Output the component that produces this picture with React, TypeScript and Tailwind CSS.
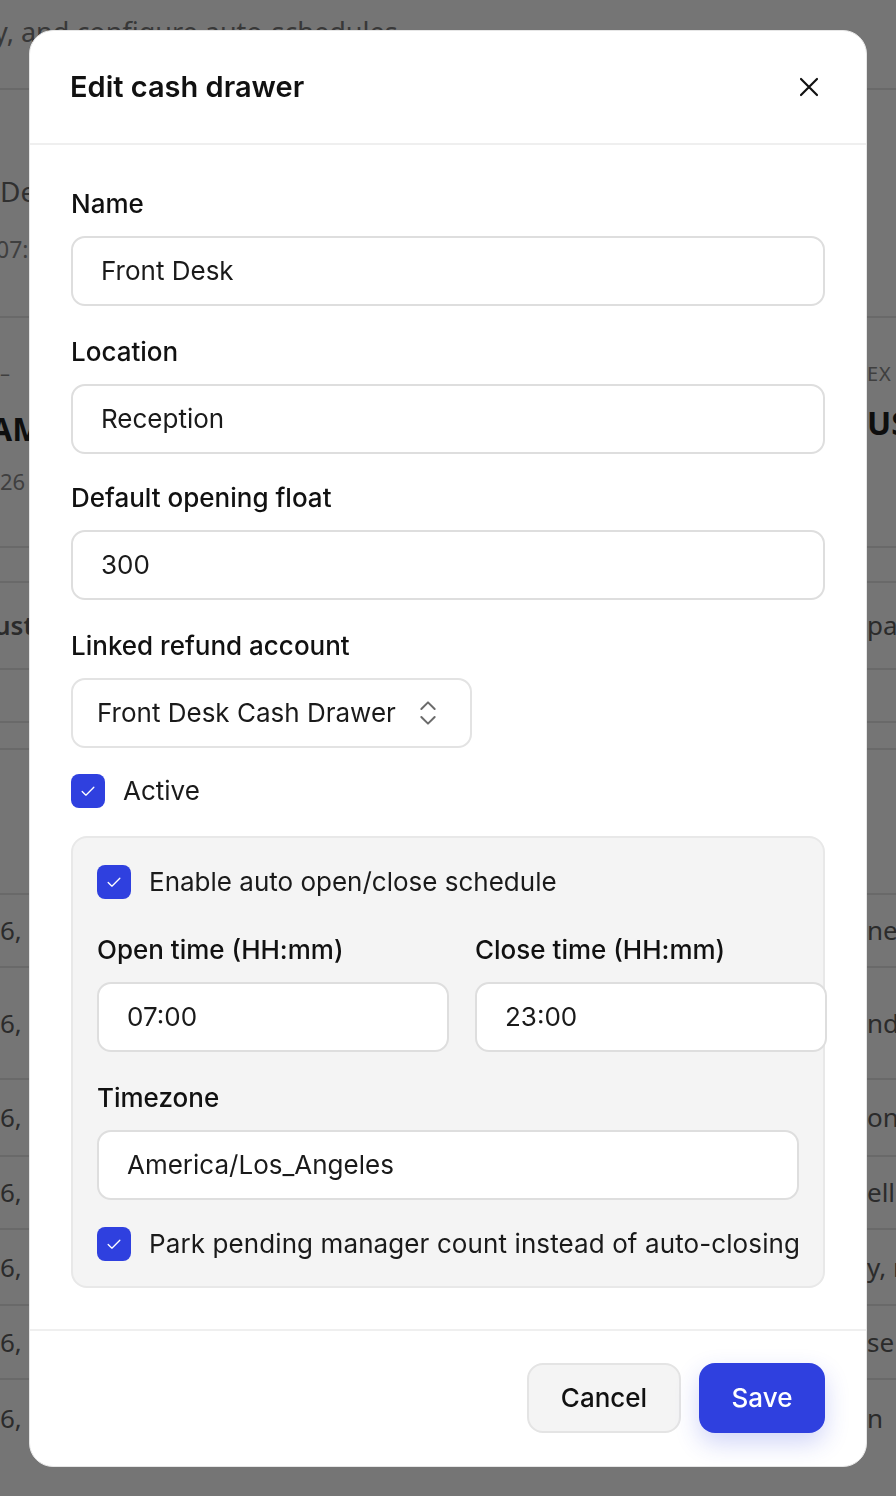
import { useState } from "react";
import { ChevronsUpDown } from "lucide-react";

type BgRow = { h: string; left?: string; right?: string; leftCls?: string; rightCls?: string; line?: boolean };

// rows of the page sitting behind the dialog; only the edges show
const bgRows: BgRow[] = [
  { h: "h-[90px]", line: true },
  { h: "h-[228px] pt-[30px]", line: true },
  { h: "h-[230px] pb-[8px]", line: true },
  { h: "h-[35px]", line: true },
  { h: "h-[87px]", left: "ust", right: "pa", leftCls: "-ml-[6px] font-semibold", line: true },
  { h: "h-[53px]", line: true },
  { h: "h-[27px]", line: true },
  { h: "h-[145px]", line: true },
  { h: "h-[73px]", left: "6,", right: "ne", line: true },
  { h: "h-[112px]", left: "6,", right: "nd", line: true },
  { h: "h-[77px]", left: "6,", right: "on", line: true },
  { h: "h-[73px]", left: "6,", right: "ell", line: true },
  { h: "h-[76px]", left: "6,", right: "y, r", rightCls: "-ml-[4px]", line: true },
  { h: "h-[74px]", left: "6,", right: "se", line: true },
  { h: "h-[77px]", left: "6,", right: "n", line: false },
];

function Checkbox({ checked, onChange }: { checked: boolean; onChange: () => void }) {
  return (
    <button
      type="button"
      onClick={onChange}
      className={`w-[34px] h-[34px] shrink-0 rounded-[8px] flex items-center justify-center ${
        checked ? "bg-[#2f40df]" : "bg-white border-2 border-[#d4d4d4]"
      }`}
    >
      {checked && (
        <svg width="20" height="20" viewBox="0 0 24 24" fill="none">
          <path d="M5 12.5l4.5 4.5L19 7.5" stroke="white" strokeWidth="1.6" strokeLinecap="round" strokeLinejoin="round" />
        </svg>
      )}
    </button>
  );
}

function Field({ label, value, onChange, className = "" }: { label: string; value: string; onChange: (v: string) => void; className?: string }) {
  return (
    <div className={`flex flex-col ${className}`}>
      <label className="text-[26px] leading-[30px] font-medium text-[#111] mb-[17px] whitespace-nowrap">{label}</label>
      <input
        value={value}
        onChange={(e) => onChange(e.target.value)}
        className="h-[70px] w-full rounded-[14px] border-2 border-[#dedede] bg-white px-[28px] text-[26px] text-[#1a1a1a] outline-none"
      />
    </div>
  );
}

export default function App() {
  const [form, setForm] = useState({
    name: "Front Desk",
    location: "Reception",
    float: "300",
    open: "07:00",
    close: "23:00",
    tz: "America/Los_Angeles",
  });
  const [active, setActive] = useState(true);
  const [auto, setAuto] = useState(true);
  const [park, setPark] = useState(true);

  return (
    <div className="relative h-[1496px] w-full overflow-hidden bg-white" style={{ fontFamily: "Inter, 'Noto Sans', sans-serif" }}>
      {/* Page behind */}
      <div className="flex flex-col text-[#5f5f5f]" style={{ fontFamily: "'Noto Sans', sans-serif" }}>
        {bgRows.map((r, i) => (
          <div key={i} className={`${r.h} flex items-center justify-between ${r.line ? "border-b-2 border-[#e4e4e4]" : ""}`}>
            {i === 0 ? (
              <div className="self-start mt-[12px] -ml-[6px] text-[27px] text-[#7a7a7a] whitespace-nowrap">y, and configure auto-schedules</div>
            ) : i === 1 ? (
              <div className="flex flex-col gap-[20px]">
                <span className="text-[28px] text-[#6a6a6a]">De</span>
                <span className="-ml-[4px] text-[23px] text-[#8a8a8a]">07:0</span>
              </div>
            ) : i === 2 ? (
              <>
                <div className="flex flex-col">
                  <span className="text-[20px] text-[#8a8a8a]">–</span>
                  <span className="-ml-[10px] mt-[16px] text-[32px] font-bold text-[#1f1f1f]">AM</span>
                  <span className="mt-[12px] text-[22px] text-[#8a8a8a]">26</span>
                </div>
                <div className="flex flex-col w-[29px] overflow-hidden">
                  <span className="text-[20px] text-[#8a8a8a] tracking-wider">EX</span>
                  <span className="mt-[10px] text-[32px] font-bold text-[#1f1f1f]">US</span>
                  <span className="h-[50px]" />
                </div>
              </>
            ) : (
              <>
                <span className={`text-[26px] whitespace-nowrap ${r.leftCls ?? ""}`}>{r.left}</span>
                <span className={`w-[29px] overflow-hidden text-[26px] whitespace-nowrap ${r.rightCls ?? ""}`}>{r.right}</span>
              </>
            )}
          </div>
        ))}
      </div>

      {/* Overlay */}
      <div className="fixed inset-0 bg-black/[0.54] flex items-center justify-center p-[29px]">
        <div className="w-full bg-white rounded-[24px] border border-[#e6e6e6] overflow-hidden flex flex-col">
          {/* Header */}
          <div className="h-[114px] px-[40px] flex items-center justify-between border-b-2 border-[#efefef]">
            <h2 className="text-[29px] leading-[34px] font-semibold text-[#111]">Edit cash drawer</h2>
            <button type="button" className="w-[36px] h-[36px] -mr-[1px] flex items-center justify-center text-[#111]">
              <svg width="20" height="20" viewBox="0 0 20 20" fill="none">
                <path d="M2 2l16 16M18 2L2 18" stroke="currentColor" strokeWidth="2.2" strokeLinecap="round" />
              </svg>
            </button>
          </div>

          {/* Body */}
          <div className="px-[41px] pt-[44px] pb-[41px] flex flex-col">
            <Field label="Name" value={form.name} onChange={(v) => setForm({ ...form, name: v })} />
            <Field label="Location" value={form.location} onChange={(v) => setForm({ ...form, location: v })} className="mt-[31px]" />
            <Field label="Default opening float" value={form.float} onChange={(v) => setForm({ ...form, float: v })} className="mt-[29px]" />

            <div className="flex flex-col mt-[31px]">
              <label className="text-[26px] leading-[30px] font-medium text-[#111] mb-[17px]">Linked refund account</label>
              <button
                type="button"
                className="self-start h-[70px] rounded-[14px] border-2 border-[#e3e3e3] bg-white pl-[24px] pr-[26px] flex items-center gap-[16px] text-[26px] text-[#1a1a1a]"
              >
                Front Desk Cash Drawer
                <ChevronsUpDown size={32} strokeWidth={1.5} className="text-[#6b6b6b]" />
              </button>
            </div>

            <div className="mt-[26px] flex items-center gap-[18px]">
              <Checkbox checked={active} onChange={() => setActive(!active)} />
              <span className="text-[26px] leading-[34px] text-[#1a1a1a]">Active</span>
            </div>

            {/* Schedule panel */}
            <div className="mt-[28px] rounded-[16px] border-2 border-[#e8e8e8] bg-[#f4f4f4] px-[24px] pt-[27px] pb-[25px] flex flex-col">
              <div className="flex items-center gap-[18px]">
                <Checkbox checked={auto} onChange={() => setAuto(!auto)} />
                <span className="text-[26px] leading-[34px] text-[#1a1a1a]">Enable auto open/close schedule</span>
              </div>

              <div className="mt-[36px] grid grid-cols-[352px_352px] gap-x-[26px]">
                <Field label="Open time (HH:mm)" value={form.open} onChange={(v) => setForm({ ...form, open: v })} />
                <Field label="Close time (HH:mm)" value={form.close} onChange={(v) => setForm({ ...form, close: v })} />
              </div>

              <Field label="Timezone" value={form.tz} onChange={(v) => setForm({ ...form, tz: v })} className="mt-[31px]" />

              <div className="mt-[27px] flex items-center gap-[18px]">
                <Checkbox checked={park} onChange={() => setPark(!park)} />
                <span className="text-[26px] leading-[34px] tracking-[0.1px] text-[#1a1a1a] whitespace-nowrap">
                  Park pending manager count instead of auto-closing
                </span>
              </div>
            </div>
          </div>

          {/* Footer */}
          <div className="border-t-2 border-[#efefef] px-[41px] pt-[32px] pb-[33px] flex justify-end gap-[18px]">
            <button
              type="button"
              className="h-[70px] w-[154px] rounded-[16px] border-2 border-[#e4e4e4] bg-[#f4f4f4] text-[26px] font-medium text-[#111]"
            >
              Cancel
            </button>
            <button
              type="button"
              className="h-[70px] w-[126px] rounded-[16px] bg-[#2f40df] text-[26px] font-medium text-white shadow-[0_10px_24px_rgba(47,64,223,0.22)]"
            >
              Save
            </button>
          </div>
        </div>
      </div>
    </div>
  );
}
